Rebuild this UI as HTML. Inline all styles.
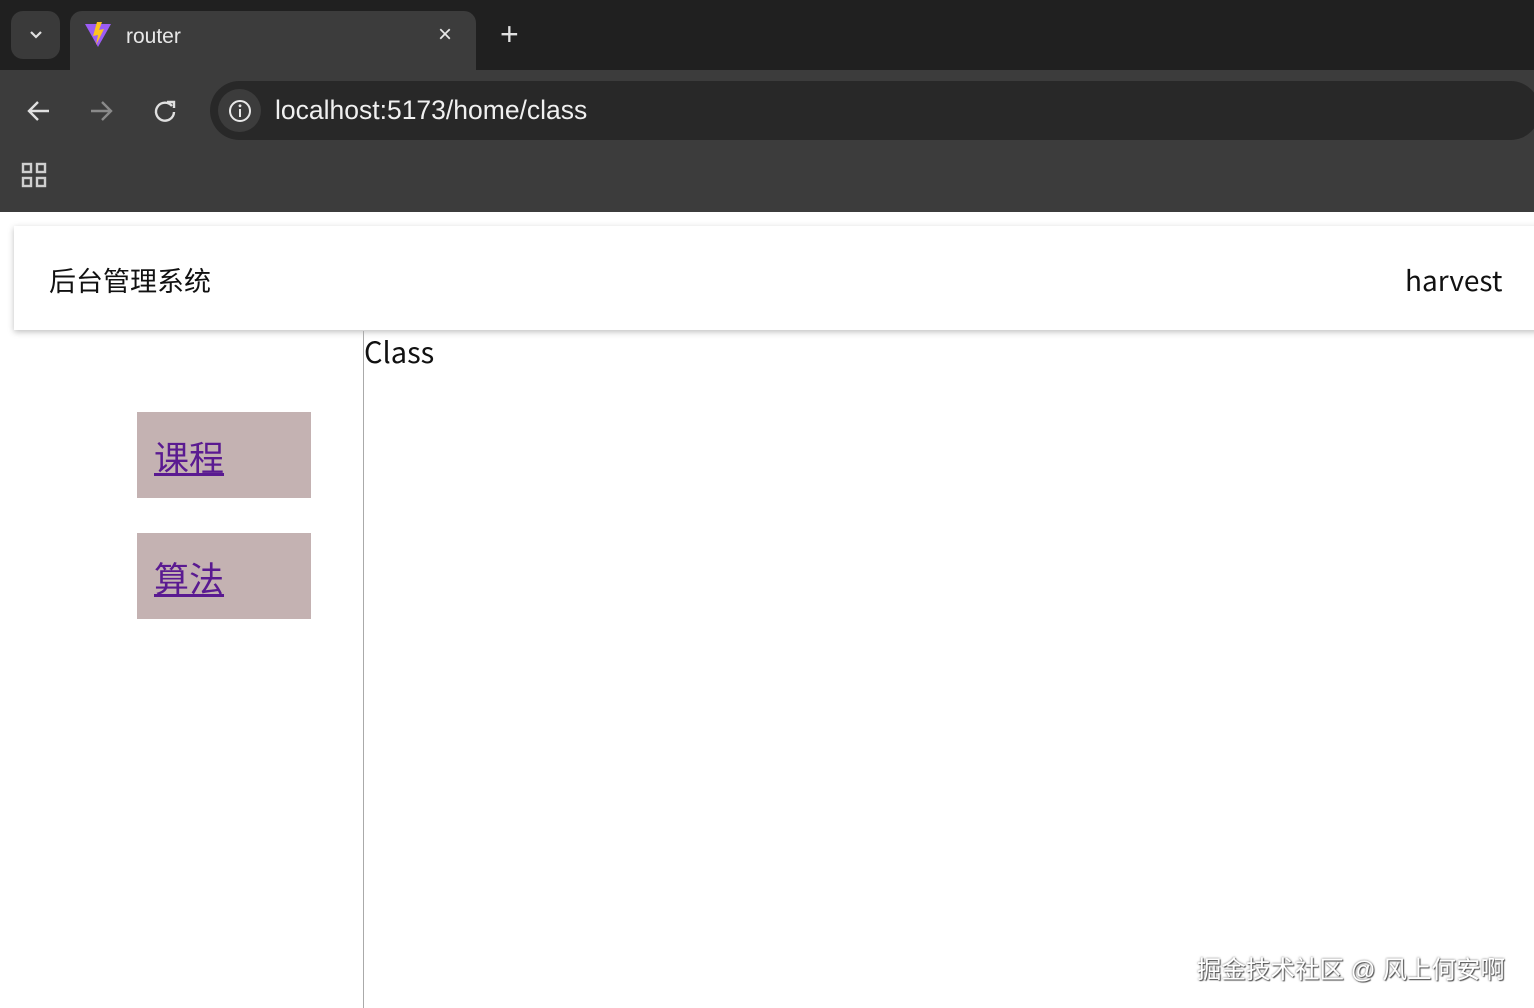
<!DOCTYPE html>
<html><head><meta charset="utf-8"><style>
*{margin:0;padding:0;box-sizing:border-box}
body{width:1534px;height:1008px;overflow:hidden;background:#fff;font-family:"Liberation Sans","Noto Sans CJK SC",sans-serif;position:relative}
.abs{position:absolute}
.n{font-family:"Noto Sans CJK SC",sans-serif}
</style></head><body>
<div class="abs" style="left:0;top:0;width:1534px;height:212px;background:#3c3c3c"></div>
<div class="abs" style="left:0;top:0;width:1534px;height:70px;background:#202020"></div>
<div class="abs" style="left:11px;top:11px;width:49px;height:48px;border-radius:12px;background:#3a3a3a"></div>
<svg class="abs" style="left:27px;top:27px" width="18" height="16"><path d="M4 5 L9 10 L14 5" stroke="#e0e0e0" stroke-width="2.2" fill="none"/></svg>
<div class="abs" style="left:70px;top:11px;width:406px;height:62px;border-radius:12px 12px 0 0;background:#3c3c3c"></div>
<svg class="abs" style="left:83px;top:20px" width="30" height="30"><path d="M2 4 L15 27 L28 4 Z" fill="#9c5cf5"/><path d="M14 2 L10 16 L15 15 L13 25 L21 9 L16 10 L19 2Z" fill="#fdc41e"/></svg>
<div class="abs" style="left:126px;top:25px;font-size:21px;color:#e8e8e8">router</div>
<div class="abs" style="left:438px;top:21px;font-size:24px;color:#e8e8e8">×</div>
<div class="abs" style="left:500px;top:16px;font-size:32px;color:#e0e0e0;font-weight:300">+</div>
<svg class="abs" style="left:24px;top:96px" width="30" height="30"><path d="M25 15 H6 M14 6 L5 15 L14 24" stroke="#e0e0e0" stroke-width="2.4" fill="none"/></svg>
<svg class="abs" style="left:86px;top:96px" width="30" height="30"><path d="M5 15 H24 M16 6 L25 15 L16 24" stroke="#8a8a8a" stroke-width="2.4" fill="none"/></svg>
<svg class="abs" style="left:150px;top:96px" width="30" height="30"><path d="M22 10 A9 9 0 1 0 24 16" stroke="#e0e0e0" stroke-width="2.4" fill="none"/><path d="M17 6 H24 V12" stroke="#e0e0e0" stroke-width="2.4" fill="none"/></svg>
<div class="abs" style="left:210px;top:81px;width:1330px;height:59px;border-radius:30px;background:#282828"></div>
<div class="abs" style="left:218px;top:89px;width:43px;height:43px;border-radius:50%;background:#3c3c3c"></div>
<svg class="abs" style="left:228px;top:99px" width="24" height="24"><circle cx="12" cy="12" r="10" stroke="#e8e8e8" stroke-width="2" fill="none"/><path d="M12 10 V18" stroke="#e8e8e8" stroke-width="2"/><circle cx="12" cy="6.8" r="1.4" fill="#e8e8e8"/></svg>
<div class="abs" style="left:275px;top:95px;font-size:26.5px;color:#f0f0f0">localhost:5173/home/class</div>
<svg class="abs" style="left:20px;top:161px" width="30" height="30"><g fill="none" stroke="#cfcfcf" stroke-width="2.4"><rect x="3" y="3" width="8" height="8"/><rect x="17" y="3" width="8" height="8"/><rect x="3" y="17" width="8" height="8"/><rect x="17" y="17" width="8" height="8"/></g></svg>
<div class="abs" style="left:14px;top:226px;width:1530px;height:104px;background:#fff;box-shadow:0 2px 6px rgba(0,0,0,.25)"></div>
<div class="abs n" style="left:49px;top:260px;font-size:27px;line-height:40px;color:#111">后台管理系统</div>
<div class="abs n" style="left:1405px;top:260px;font-size:28px;line-height:40px;color:#111">harvest</div>
<div class="abs" style="left:363px;top:331px;width:1px;height:677px;background:#aaa"></div>
<div class="abs n" style="left:364px;top:331px;font-size:29px;line-height:40px;color:#111">Class</div>
<div class="abs" style="left:137px;top:412px;width:174px;height:86px;background:#c4b2b2"></div>
<div class="abs" style="left:137px;top:533px;width:174px;height:86px;background:#c4b2b2"></div>
<div class="abs n" style="left:154px;top:432px;font-size:35px;line-height:50px;color:#5a1a91;text-decoration:underline">课程</div>
<div class="abs n" style="left:154px;top:553px;font-size:35px;line-height:50px;color:#5a1a91;text-decoration:underline">算法</div>
<div class="abs" style="left:1197px;top:951px;font-size:24.5px;color:#fff;text-shadow:0 0 2px #666,1px 1px 1px #444">掘金技术社区 @ 风上何安啊</div>
</body></html>
